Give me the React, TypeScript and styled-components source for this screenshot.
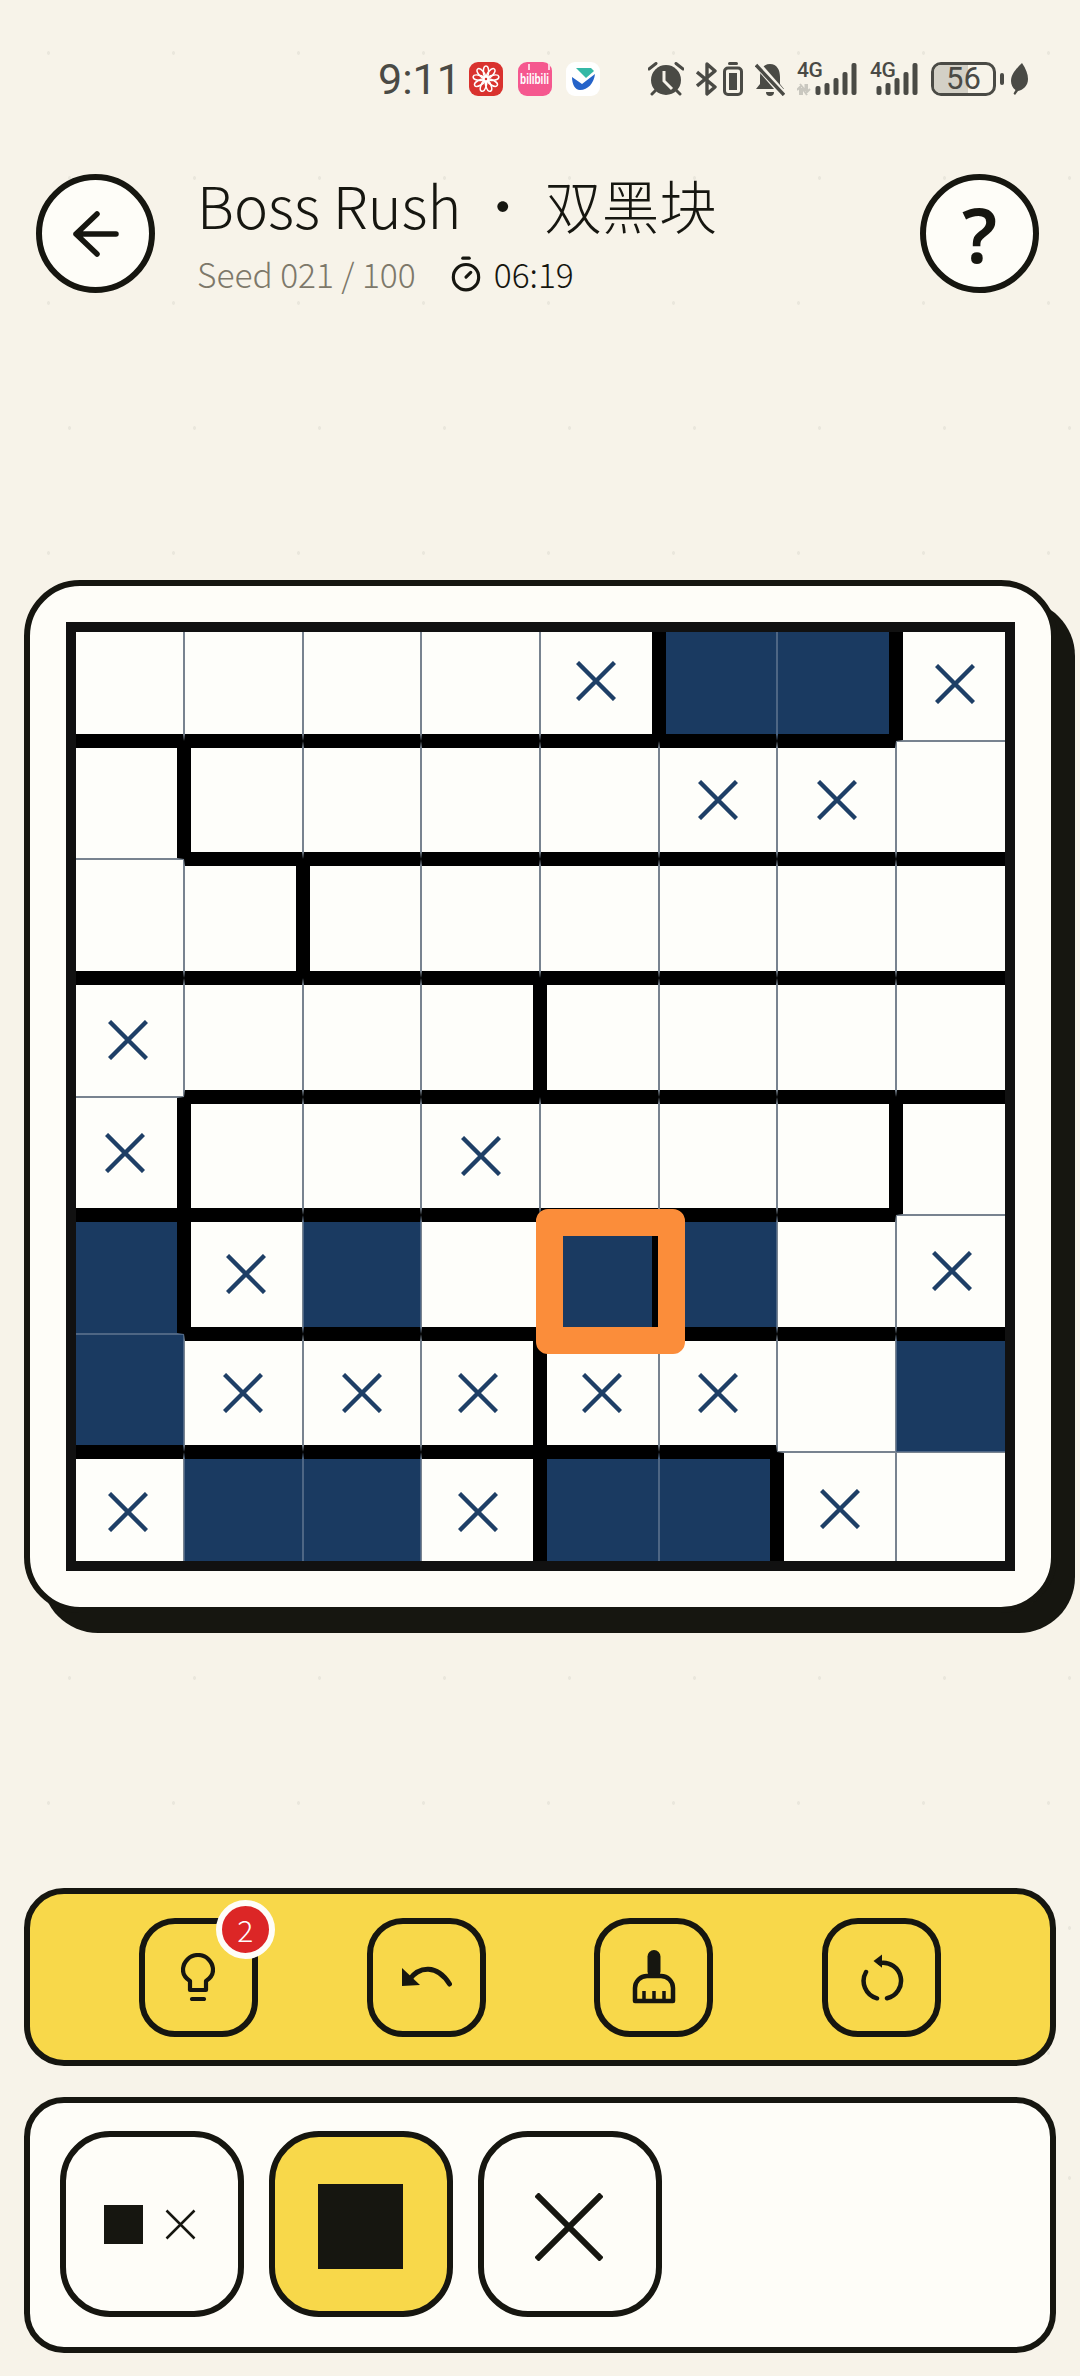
import React from 'react';
import styled, { createGlobalStyle } from 'styled-components';
import { Timer } from 'lucide-react';

const INK = '#161610';
const PAPER = '#fefdf8';
const YELLOW = '#f8d84a';
const STATUS = '#4a4a45';
const CJK = '"Noto Sans CJK SC", "Noto Sans", sans-serif';

const GlobalStyle = createGlobalStyle`
  html, body {
    margin: 0;
    padding: 0;
    background-color: #f7f3e9;
  }
  * { box-sizing: border-box; }
`;

const Page = styled.div`
  width: 1080px;
  height: 2376px;
  overflow: hidden;
  display: flex;
  flex-direction: column;
  background-color: #f7f3e9;
  background-image:
    radial-gradient(circle, rgba(0, 0, 0, 0.05) 1.5px, transparent 2px),
    radial-gradient(circle, rgba(0, 0, 0, 0.05) 1.5px, transparent 2px);
  background-size: 125px 250px;
  background-position: -14px -72px, 7px 53px;
`;

/* status bar */
const StatusBar = styled.div`
  height: 174px;
  padding: 62px 0 0 378px;
  display: flex;
  align-items: flex-start;
`;

const Clock = styled.span`
  font-family: Roboto, sans-serif;
  font-size: 43px;
  line-height: 34px;
  height: 34px;
  width: 75px;
  color: ${STATUS};
`;

const AppIcons = styled.div`
  display: flex;
  gap: 14.5px;
  margin: 0 48px 0 16px;
`;

const AppIcon = styled.div<{ $bg: string }>`
  position: relative;
  width: 34px;
  height: 34px;
  border-radius: 9px;
  background: ${({ $bg }) => $bg};
  display: flex;
  align-items: center;
  justify-content: center;
`;

const BiliText = styled.span`
  font-family: "Liberation Sans", sans-serif;
  font-size: 10px;
  font-weight: 700;
  line-height: 1;
  color: #fff;
  transform: scaleY(1.5);

  &::before {
    content: '';
    position: absolute;
    top: -5px;
    left: 8px;
    width: 18px;
    height: 4px;
    border-left: 2px solid #ffd0e0;
    border-right: 2px solid #ffd0e0;
  }
`;

const StatusIcons = styled.div<{ $gap: number }>`
  display: flex;
  align-items: center;
  gap: ${({ $gap }) => $gap}px;
  height: 34px;
`;

const SignalBox = styled.div`
  position: relative;
  height: 34px;
  display: flex;
`;

const SignalLabel = styled.span`
  position: absolute;
  top: -1px;
  left: 0;
  font-family: Roboto, sans-serif;
  font-size: 21px;
  font-weight: 500;
  line-height: 19px;
  letter-spacing: -0.5px;
  color: ${STATUS};
`;

const Battery = styled.div`
  position: relative;
  width: 65px;
  height: 34px;
  border: 3px solid ${STATUS};
  border-radius: 10px;
  display: flex;
  align-items: center;
  justify-content: center;
  font-family: Roboto, sans-serif;
  font-size: 31px;
  line-height: 28px;
  color: ${STATUS};

  &::before {
    content: '';
    position: absolute;
    inset: 0 42% 0 0;
    border-radius: 7px 0 0 7px;
    background: #d3d0c6;
  }
`;

const BatteryValue = styled.span`
  position: relative;
`;

const BatteryNub = styled.div`
  width: 4px;
  height: 12px;
  border-radius: 2px;
  background: ${STATUS};
  margin-right: 3px;
`;

/* header */
const Header = styled.header`
  height: 119px;
  padding: 0 41px 0 36px;
  display: flex;
  align-items: flex-start;
`;

const RoundButton = styled.button`
  width: 119px;
  height: 119px;
  flex: none;
  padding: 0;
  border: 6px solid ${INK};
  border-radius: 50%;
  background: ${PAPER};
  color: ${INK};
  display: flex;
  align-items: center;
  justify-content: center;
  font-family: "Noto Sans", sans-serif;
  font-size: 76px;
  font-weight: 600;
  line-height: 1;
`;

const Heading = styled.div`
  flex: 1;
  margin: -6px 0 0 42px;
`;

const Title = styled.h1`
  margin: 0;
  font-family: ${CJK};
  font-size: 57.5px;
  font-weight: 300;
  line-height: 72px;
  color: ${INK};
  white-space: pre;
`;

const SubRow = styled.div`
  display: flex;
  align-items: center;
  margin-top: 12px;
  font-family: ${CJK};
  font-size: 33.5px;
  font-weight: 300;
  line-height: 44px;
`;

const Seed = styled.span`
  color: #7d786a;
  margin-right: 31px;
`;

const Elapsed = styled.span`
  color: ${INK};
  margin-left: 9px;
`;

/* board */
const BoardCard = styled.section`
  margin: 287px 23.5px 0;
  padding: 36px;
  border: 6px solid ${INK};
  border-radius: 56px;
  background: ${PAPER};
  box-shadow: 18px 20px 0 ${INK};
`;

const Grid = styled.div`
  position: relative;
  display: grid;
  grid-template-columns: repeat(8, 1fr);
  grid-template-rows: repeat(8, 1fr);
  aspect-ratio: 1;

  &::after {
    content: '';
    position: absolute;
    inset: 0;
    border: 10px solid #111;
    pointer-events: none;
  }
`;

type Edges = { $top: boolean; $right: boolean; $bottom: boolean; $left: boolean; $filled: boolean };

const edge = (thick: boolean, filled: boolean) =>
  thick ? '7px solid #000' : `1px solid ${filled ? '#4e6684' : '#78838f'}`;

const Cell = styled.div<Edges>`
  position: relative;
  min-width: 0;
  min-height: 0;
  display: flex;
  align-items: center;
  justify-content: center;
  background: ${({ $filled }) => ($filled ? '#1a3a61' : '#fefefa')};
  border-top: ${({ $top, $filled }) => edge($top, $filled)};
  border-right: ${({ $right, $filled }) => edge($right, $filled)};
  border-bottom: ${({ $bottom, $filled }) => edge($bottom, $filled)};
  border-left: ${({ $left, $filled }) => edge($left, $filled)};
`;

const Cursor = styled.div`
  position: absolute;
  top: -13px;
  right: -33px;
  bottom: -27px;
  left: -5px;
  border: 27px solid #fb8d3a;
  border-radius: 12px;
  z-index: 5;
`;

/* tools */
const Toolbar = styled.div`
  margin: 275px 24px 0;
  height: 178px;
  border: 6px solid ${INK};
  border-radius: 40px;
  background: ${YELLOW};
  display: flex;
  align-items: center;
  justify-content: space-evenly;
`;

const ToolButton = styled.button`
  position: relative;
  width: 119px;
  height: 119px;
  padding: 0;
  border: 6px solid ${INK};
  border-radius: 36px;
  background: transparent;
  display: flex;
  align-items: center;
  justify-content: center;
`;

const Badge = styled.span`
  position: absolute;
  top: -24px;
  left: 71px;
  width: 59px;
  height: 59px;
  border: 6px solid ${PAPER};
  border-radius: 50%;
  background: #dc2626;
  color: #fff;
  display: flex;
  align-items: center;
  justify-content: center;
  font-family: ${CJK};
  font-size: 30px;
  font-weight: 300;
  line-height: 1;
`;

const Palette = styled.div`
  margin: 31px 24px 0;
  height: 256px;
  padding: 28px 30px;
  border: 6px solid ${INK};
  border-radius: 40px;
  background: ${PAPER};
  display: flex;
  gap: 25px;
`;

const ModeButton = styled.button<{ $active?: boolean; $large?: boolean }>`
  width: 184px;
  height: 186px;
  padding: ${({ $large }) => ($large ? '5px 2px 0 0' : '0 4px 0 0')};
  border: 6px solid ${INK};
  border-radius: 50px;
  background: ${({ $active }) => ($active ? YELLOW : PAPER)};
  display: flex;
  align-items: center;
  justify-content: center;
  gap: 22px;
`;

const ModeSquare = styled.span<{ $size: number }>`
  width: ${({ $size }) => $size}px;
  height: ${({ $size }) => $size}px;
  background: ${INK};
`;

/* drawings */
const CrossMark = ({ size = 40, width = 4.4, color = '#1e3f66' }: { size?: number; width?: number; color?: string }) => (
  <svg width={size} height={size} viewBox={`0 0 ${size} ${size}`} fill="none" stroke={color} strokeWidth={width}>
    <path d={`M1.5 1.5L${size - 1.5} ${size - 1.5}M${size - 1.5} 1.5L1.5 ${size - 1.5}`} />
  </svg>
);

const BackArrow = () => (
  <svg width="46" height="46" viewBox="0 0 46 46" fill="none" stroke={INK} strokeWidth="5.5" strokeLinecap="round" strokeLinejoin="round">
    <path d="M43 23H3M24 3L3 23l21 20" />
  </svg>
);

const BulbIcon = () => (
  <svg width="34" height="48" viewBox="0 0 34 48" fill="none" stroke={INK} strokeWidth="4.2" strokeLinejoin="round" strokeLinecap="round">
    <path d="M9 28C4.5 25 2 21.5 2 17A15 15 0 1 1 32 17C32 21.5 29.5 25 25 28V37H9Z" />
    <path d="M11 46H23" />
  </svg>
);

const UndoIcon = () => (
  <svg width="51" height="22" viewBox="0 0 51 22" fill="none">
    <path d="M1 2L1 20L19 19Z" fill={INK} />
    <path d="M8 14C18 0 36 -2 48.500 18" stroke={INK} strokeWidth="5" strokeLinecap="round" />
  </svg>
);

const BrushIcon = () => (
  <svg width="44" height="54" viewBox="0 0 44 54" fill="none">
    <rect x="15.5" y="0" width="13" height="28" rx="6.5" fill={INK} />
    <path d="M3 51V38a12 12 0 0 1 12-12h14a12 12 0 0 1 12 12V51Z" stroke={INK} strokeWidth="4.5" strokeLinejoin="round" />
    <path d="M12 41V51M22 41V51M32 41V51" stroke={INK} strokeWidth="3.5" />
  </svg>
);

const ResetIcon = () => (
  <svg width="44" height="48" viewBox="0 0 44 48" fill="none" stroke={INK} strokeWidth="4.5" strokeLinecap="round">
    <path d="M20 10A18 18 0 0 1 27 45.3" />
    <path d="M17 45.3A18 18 0 0 1 6 19" />
    <polygon points="22,1.5 13.5,8 22,14.7" fill={INK} stroke="none" />
  </svg>
);

const AlarmIcon = () => (
  <svg width="36" height="34" viewBox="0 0 36 34" fill="none">
    <circle cx="18" cy="18" r="15" fill={STATUS} />
    <path d="M1 7L8 1.5M35 7L28 1.5M4 32L8 28M32 32L28 28" stroke={STATUS} strokeWidth="3" strokeLinecap="round" />
    <path d="M16 9V19L24 27" stroke="#f6f2e9" strokeWidth="3" />
  </svg>
);

const BluetoothIcon = () => (
  <svg width="21" height="34" viewBox="0 0 21 34" fill="none" stroke={STATUS} strokeWidth="3.4" strokeLinejoin="round">
    <path d="M1 10L19 25L11 32V2L19 9L1 24" />
  </svg>
);

const CellBattery = () => (
  <svg width="20" height="34" viewBox="0 0 20 34">
    <rect x="5" y="0" width="10" height="3" rx="1.5" fill={STATUS} />
    <rect x="1.5" y="6" width="17" height="26.5" rx="3.5" fill="none" stroke={STATUS} strokeWidth="3" />
    <rect x="6" y="11" width="8" height="17" fill={STATUS} />
  </svg>
);

const BellOffIcon = () => (
  <svg width="30" height="34" viewBox="0 0 30 34">
    <path d="M15 2C8 2 5 8 5 15V22L1 27H29L25 22V15C25 8 22 2 15 2Z" fill={STATUS} />
    <path d="M11 30a4 4 0 0 0 8 0Z" fill={STATUS} />
    <path d="M1 1L29 33" stroke="#f6f2e9" strokeWidth="7" />
    <path d="M1 3L29 33" stroke={STATUS} strokeWidth="3.4" />
  </svg>
);

const SIGNAL_TOPS = [24, 21, 16, 10, 1];

const SignalIcon = ({ offset, arrows }: { offset: number; arrows?: boolean }) => (
  <SignalBox>
    <SignalLabel>4G</SignalLabel>
    <svg width={offset + 49} height="34" viewBox={`0 0 ${offset + 49} 34`}>
      {arrows && <path d="M3 33V25L0 28M3 22L7 27H5V33M10 22V30L13 27M10 33L6.500 28H8.500V22" stroke="#c9c7bf" strokeWidth="2" fill="none" />}
      {SIGNAL_TOPS.map((top, i) => (
        <rect key={i} x={offset + 6.5 + i * 9} y={top} width="5" height={33 - top} rx="2" fill={STATUS} />
      ))}
    </svg>
  </SignalBox>
);

const LeafIcon = () => (
  <svg width="17" height="32" viewBox="0 0 17 32">
    <path d="M11 0C15 6 17 11 17 16C17 23 12 27 7 28L4 32L2.500 30.500L4.500 27C1.500 25 0 21 0 18C0 11 6 5 11 0Z" fill={STATUS} />
  </svg>
);

const FlowerIcon = () => (
  <svg width="28" height="28" viewBox="0 0 28 28" fill="none" stroke="#fff" strokeWidth="1.5">
    {[0, 40, 80, 120, 160, 200, 240, 280, 320].map(a => (
      <ellipse key={a} cx="14" cy="6.500" rx="2.600" ry="5.500" transform={`rotate(${a} 14 14)`} />
    ))}
    <circle cx="14" cy="14" r="2.500" />
  </svg>
);

const BirdIcon = () => (
  <svg width="26" height="26" viewBox="0 0 26 26">
    <path d="M6 2H21L24 5L16 12Z" fill="#35b8a6" />
    <path d="M2 11L12 18L25 8C24 17 18 24 10 24C5 24 2 18 2 11Z" fill="#2563c9" />
  </svg>
);

// board content, one string per row: . empty, x crossed, # filled
const CELLS = [
  '....x##x',
  '.....xx.',
  '........',
  'x.......',
  'x..x....',
  '#x#.##.x',
  '#xxxxx.#',
  'x##x##x.',
];

// thick wall below a cell
const FLOORS = [
  '#######.',
  '.#######',
  '########',
  '.#######',
  '#######.',
  '.#######',
  '######..',
];

// thick wall right of a cell
const SIDES = [
  '....#.#',
  '#......',
  '.#.....',
  '...#...',
  '#.....#',
  '#...#..',
  '...#...',
  '...#.#.',
];

const CURSOR_ROW = 5;
const CURSOR_COL = 4;

const App: React.FC = () => {
  const cells = CELLS.flatMap((row, r) =>
    row.split('').map((mark, c) => ({
      key: `${r}-${c}`,
      mark,
      cursor: r === CURSOR_ROW && c === CURSOR_COL,
      top: r === 0 || FLOORS[r - 1][c] === '#',
      bottom: r === 7 || FLOORS[r][c] === '#',
      left: c === 0 || SIDES[r][c - 1] === '#',
      right: c === 7 || SIDES[r][c] === '#',
    })),
  );

  return (
    <Page>
      <GlobalStyle />
      <StatusBar>
        <Clock>9:11</Clock>
        <AppIcons>
          <AppIcon $bg="#d9322e"><FlowerIcon /></AppIcon>
          <AppIcon $bg="#f5588f"><BiliText>bilibili</BiliText></AppIcon>
          <AppIcon $bg="#ffffff"><BirdIcon /></AppIcon>
        </AppIcons>
        <StatusIcons $gap={12}>
          <AlarmIcon />
          <StatusIcons $gap={6}>
            <BluetoothIcon />
            <CellBattery />
          </StatusIcons>
          <BellOffIcon />
          <SignalIcon offset={12} arrows />
          <SignalIcon offset={0} />
          <StatusIcons $gap={4}>
            <Battery><BatteryValue>56</BatteryValue></Battery>
            <BatteryNub />
            <LeafIcon />
          </StatusIcons>
        </StatusIcons>
      </StatusBar>

      <Header>
        <RoundButton aria-label="back"><BackArrow /></RoundButton>
        <Heading>
          <Title>Boss Rush ・ 双黑块</Title>
          <SubRow>
            <Seed>Seed 021 / 100</Seed>
            <Timer size={38} color={INK} strokeWidth={2} />
            <Elapsed>06:19</Elapsed>
          </SubRow>
        </Heading>
        <RoundButton>?</RoundButton>
      </Header>

      <BoardCard>
        <Grid>
          {cells.map(cell => (
            <Cell
              key={cell.key}
              $top={cell.top}
              $right={cell.right}
              $bottom={cell.bottom}
              $left={cell.left}
              $filled={cell.mark === '#'}
            >
              {cell.mark === 'x' && <CrossMark />}
              {cell.cursor && <Cursor />}
            </Cell>
          ))}
        </Grid>
      </BoardCard>

      <Toolbar>
        <ToolButton>
          <BulbIcon />
          <Badge>2</Badge>
        </ToolButton>
        <ToolButton><UndoIcon /></ToolButton>
        <ToolButton><BrushIcon /></ToolButton>
        <ToolButton><ResetIcon /></ToolButton>
      </Toolbar>

      <Palette>
        <ModeButton>
          <ModeSquare $size={39} />
          <CrossMark size={31} width={2.5} color={INK} />
        </ModeButton>
        <ModeButton $active $large>
          <ModeSquare $size={85} />
        </ModeButton>
        <ModeButton $large>
          <CrossMark size={68} width={6} color={INK} />
        </ModeButton>
      </Palette>
    </Page>
  );
};

export default App;
